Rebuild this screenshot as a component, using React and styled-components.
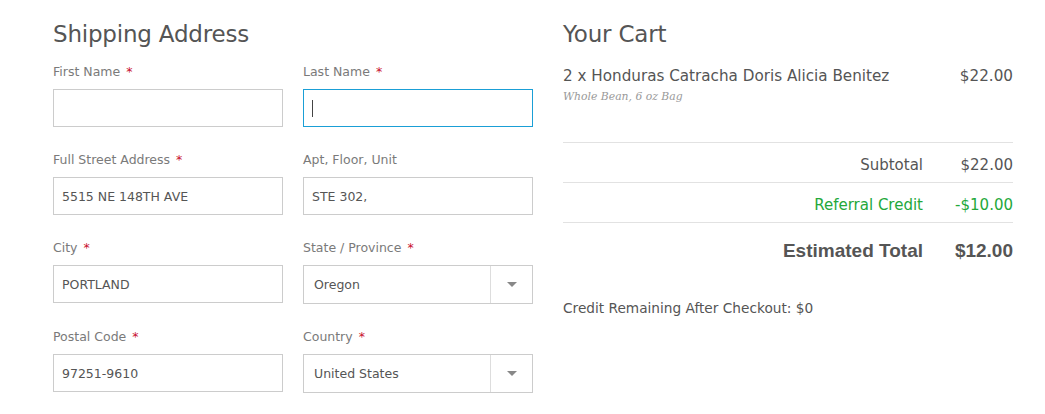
import styled, { createGlobalStyle } from 'styled-components'

const GlobalStyle = createGlobalStyle`
    * { box-sizing: border-box; }
    body {
        margin: 0;
        background: #ffffff;
        font-family: "DejaVu Sans", "Noto Sans", sans-serif;
        color: #555555;
    }
`;

const Page = styled.div`
    display: flex;
    gap: 30px;
    padding: 19px 0 0 53px;
`;

const Shipping = styled.section`
    width: 480px;
`;

const Cart = styled.section`
    width: 450px;
`;

const Heading = styled.h2`
    margin: 0 0 ${p => p.$gap || 15}px;
    font-size: 23px;
    font-weight: normal;
    color: #555555;
    line-height: 30px;
    letter-spacing: -0.2px;
`;

const FieldGrid = styled.div`
    display: grid;
    grid-template-columns: 230px 230px;
    column-gap: 20px;
    row-gap: 25px;
`;

const Field = styled.div`
    display: flex;
    flex-direction: column;
`;

const Label = styled.label`
    font-size: 12.5px;
    color: #7a7a7a;
    line-height: 16px;
    margin-bottom: 9px;
    span {
        color: #c8102e;
        margin-left: 6px;
    }
`;

const Input = styled.div`
    height: ${p => (p.$select ? 39 : 38)}px;
    border: 1px solid ${p => (p.$focused ? '#1a9fd6' : '#cccccc')};
    display: flex;
    align-items: center;
    font-size: 12.5px;
    color: #555555;
    padding-left: ${p => (p.$select ? 10 : 8)}px;
`;

const Caret = styled.span`
    display: inline-block;
    width: 1px;
    height: 17px;
    background: #444;
`;

const SelectValue = styled.span`
    flex: 1;
`;

const SelectArrow = styled.span`
    width: 42px;
    height: 100%;
    border-left: 1px solid #dddddd;
    display: flex;
    align-items: center;
    justify-content: center;
    &::after {
        content: '';
        border-left: 5px solid transparent;
        border-right: 5px solid transparent;
        border-top: 5px solid #888888;
    }
`;

const ItemRow = styled.div`
    display: flex;
    justify-content: space-between;
    padding-bottom: 39px;
    border-bottom: 1px solid #e2e2e2;
`;

const ItemName = styled.div`
    font-size: 15.2px;
    line-height: 20px;
    color: #555555;
`;

const ItemMeta = styled.div`
    font-family: "DejaVu Serif", "Liberation Serif", serif;
    font-style: italic;
    font-size: 10.8px;
    color: #999999;
    margin-top: 4px;
`;

const Price = styled.div`
    font-size: 15.2px;
    line-height: 20px;
`;

const TotalRow = styled.div`
    display: flex;
    justify-content: flex-end;
    align-items: center;
    height: ${p => (p.$big ? 56 : 40)}px;
    padding-top: ${p => (p.$big ? 0 : 5)}px;
    border-bottom: ${p => (p.$big ? 'none' : '1px solid #e2e2e2')};
    font-family: ${p => (p.$big ? '"Liberation Sans", Arial, sans-serif' : 'inherit')};
    font-size: ${p => (p.$big ? 19 : 15)}px;
    font-weight: ${p => (p.$big ? 'bold' : 'normal')};
    color: ${p => (p.$credit ? '#24a83a' : '#555555')};
`;

const TotalLabel = styled.span`
    text-align: right;
`;

const TotalValue = styled.span`
    width: 90px;
    text-align: right;
`;

const Remaining = styled.p`
    margin: 21px 0 0;
    font-size: 13.7px;
    color: #555555;
`;

const Req = () => <span>*</span>;

function App() {
  return (
    <>
      <GlobalStyle />
      <Page>
        <Shipping>
          <Heading>Shipping Address</Heading>
          <FieldGrid>
            <Field>
              <Label>First Name<Req /></Label>
              <Input />
            </Field>
            <Field>
              <Label>Last Name<Req /></Label>
              <Input $focused><Caret /></Input>
            </Field>
            <Field>
              <Label>Full Street Address<Req /></Label>
              <Input>5515 NE 148TH AVE</Input>
            </Field>
            <Field>
              <Label>Apt, Floor, Unit</Label>
              <Input>STE 302,</Input>
            </Field>
            <Field>
              <Label>City<Req /></Label>
              <Input>PORTLAND</Input>
            </Field>
            <Field>
              <Label>State / Province<Req /></Label>
              <Input $select><SelectValue>Oregon</SelectValue><SelectArrow /></Input>
            </Field>
            <Field>
              <Label>Postal Code<Req /></Label>
              <Input>97251-9610</Input>
            </Field>
            <Field>
              <Label>Country<Req /></Label>
              <Input $select><SelectValue>United States</SelectValue><SelectArrow /></Input>
            </Field>
          </FieldGrid>
        </Shipping>
        <Cart>
          <Heading $gap={17}>Your Cart</Heading>
          <ItemRow>
            <div>
              <ItemName>2 x Honduras Catracha Doris Alicia Benitez</ItemName>
              <ItemMeta>Whole Bean, 6 oz Bag</ItemMeta>
            </div>
            <Price>$22.00</Price>
          </ItemRow>
          <TotalRow>
            <TotalLabel>Subtotal</TotalLabel>
            <TotalValue>$22.00</TotalValue>
          </TotalRow>
          <TotalRow $credit>
            <TotalLabel>Referral Credit</TotalLabel>
            <TotalValue>-$10.00</TotalValue>
          </TotalRow>
          <TotalRow $big>
            <TotalLabel>Estimated Total</TotalLabel>
            <TotalValue>$12.00</TotalValue>
          </TotalRow>
          <Remaining>Credit Remaining After Checkout: $0</Remaining>
        </Cart>
      </Page>
    </>
  );
}

export default App;
